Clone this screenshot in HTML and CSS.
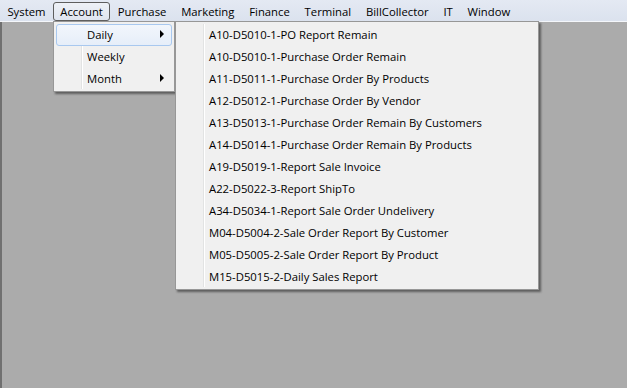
FILE: index.html
```html
<!DOCTYPE html>
<html>
<head>
<meta charset="utf-8">
<link rel="stylesheet" href="styles.css">
</head>
<body>
<div class="menubar">
  <span class="mi">System</span>
  <span class="mi active">Account</span>
  <span class="mi">Purchase</span>
  <span class="mi">Marketing</span>
  <span class="mi">Finance</span>
  <span class="mi">Terminal</span>
  <span class="mi">BillCollector</span>
  <span class="mi">IT</span>
  <span class="mi">Window</span>
</div>
<div class="client"></div>

<div class="menu menu1">
  <div class="item hl"><span class="label">Daily</span><span class="arrow"></span></div>
  <div class="item"><span class="label">Weekly</span></div>
  <div class="item"><span class="label">Month</span><span class="arrow"></span></div>
</div>

<div class="menu menu2">
  <div class="item"><span class="label">A10-D5010-1-PO Report Remain</span></div>
  <div class="item"><span class="label">A10-D5010-1-Purchase Order Remain</span></div>
  <div class="item"><span class="label">A11-D5011-1-Purchase Order By Products</span></div>
  <div class="item"><span class="label">A12-D5012-1-Purchase Order By Vendor</span></div>
  <div class="item"><span class="label">A13-D5013-1-Purchase Order Remain By Customers</span></div>
  <div class="item"><span class="label">A14-D5014-1-Purchase Order Remain By Products</span></div>
  <div class="item"><span class="label">A19-D5019-1-Report Sale Invoice</span></div>
  <div class="item"><span class="label">A22-D5022-3-Report ShipTo</span></div>
  <div class="item"><span class="label">A34-D5034-1-Report Sale Order Undelivery</span></div>
  <div class="item"><span class="label">M04-D5004-2-Sale Order Report By Customer</span></div>
  <div class="item"><span class="label">M05-D5005-2-Sale Order Report By Product</span></div>
  <div class="item"><span class="label">M15-D5015-2-Daily Sales Report</span></div>
</div>
</body>
</html>
```

FILE: styles.css
```css
html, body {
  margin: 0;
  padding: 0;
  height: 100%;
}
body {
  background: #ababab;
  font-family: "Open Sans", "Noto Sans", sans-serif;
  font-size: 11.3px;
  color: #000;
  overflow: hidden;
  position: relative;
}
.menubar {
  height: 22px;
  display: flex;
  align-items: center;
  padding-left: 0;
  background: linear-gradient(#e4e9f3, #dbe2ee);
  border-bottom: 1px solid #f4f6fa;
  box-sizing: border-box;
}
.mi {
  padding: 0 6.4px;
  height: 19px;
  line-height: 18px;
  box-sizing: border-box;
  border: 1px solid transparent;
  margin-top: 1px;
  white-space: nowrap;
}
.mi.active {
  border-color: #5e5e5e;
  border-radius: 3px;
  background: linear-gradient(#eef1f7, #dfe5ef);
}
.client {
  height: calc(100% - 22px);
  border-left: 2px solid #707070;
  box-sizing: border-box;
}
.menu {
  position: absolute;
  background: #f0f0f0;
  border: 1px solid #979797;
  padding: 2px 2px 1px 2px;
  box-shadow: 2px 2px 2px rgba(0, 0, 0, 0.45);
  box-sizing: border-box;
}
.menu::before {
  content: "";
  position: absolute;
  top: 2px;
  bottom: 2px;
  left: 27px;
  width: 1px;
  background: #e2e3e3;
  box-shadow: 1px 0 0 #ffffff;
}
.menu1 {
  left: 53px;
  top: 21px;
  width: 122px;
}
.menu2 {
  left: 175px;
  top: 21px;
  width: 364px;
}
.item {
  position: relative;
  height: 22px;
  line-height: 19px;
  padding-left: 30px;
  box-sizing: border-box;
  border: 1px solid transparent;
  border-radius: 3px;
  white-space: nowrap;
}
.item.hl {
  border-color: #a8c8ef;
  background: linear-gradient(#f2f6fc, #e6eef9);
  z-index: 1;
}
.arrow {
  position: absolute;
  right: 7px;
  top: 5px;
  width: 0;
  height: 0;
  border-top: 4px solid transparent;
  border-bottom: 4px solid transparent;
  border-left: 4px solid #000;
}
```
